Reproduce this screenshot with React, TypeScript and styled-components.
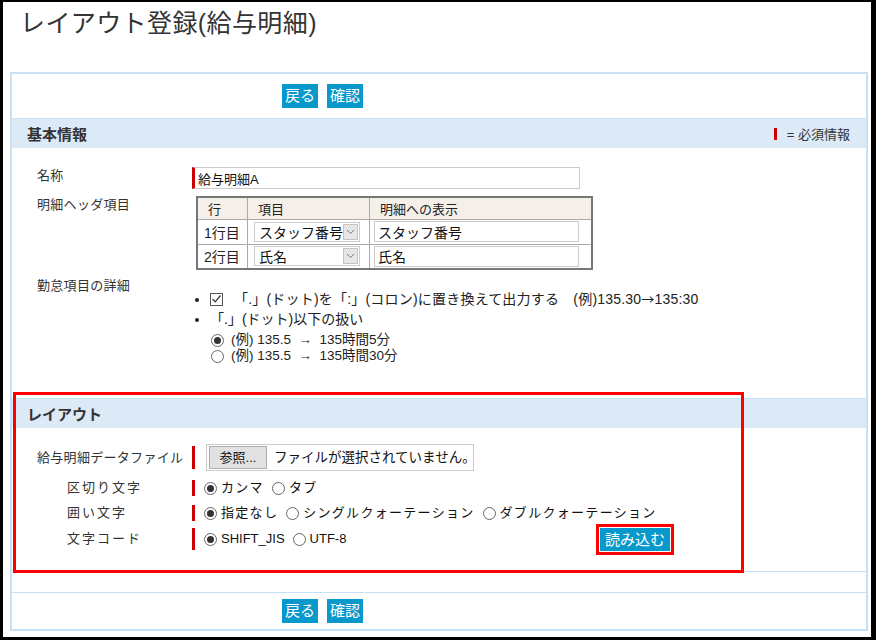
import styled, { createGlobalStyle } from "styled-components";

const GlobalStyle = createGlobalStyle`
  html, body {
    margin: 0;
    padding: 0;
    background: #fff;
  }
  body {
    font-family: "Liberation Sans", "Noto Sans CJK JP", sans-serif;
    color: #333;
  }
  * {
    box-sizing: border-box;
  }
`;

const Frame = styled.div`
  width: 876px;
  height: 640px;
  border-style: solid;
  border-color: #000;
  border-width: 2px 5px 3px 3px;
  background: #fff;
  overflow: hidden;
`;

const PageTitle = styled.h1`
  margin: 0;
  height: 70px;
  padding: 5px 0 0 17px;
  font-size: 25px;
  font-weight: normal;
  line-height: 32px;
  letter-spacing: 0.4px;
  white-space: nowrap;
  color: #333;
`;

const Panel = styled.div`
  margin: 0 3px 0 7px;
  border: 2px solid #c8e0f4;
`;

const ButtonBar = styled.div<{ $top?: boolean }>`
  display: flex;
  gap: 9px;
  height: ${(p) => (p.$top ? "44px" : "37px")};
  padding: ${(p) => (p.$top ? "10px" : "6px")} 0 0 270px;
  border-top: ${(p) => (p.$top ? "none" : "1px solid #c8e0f4")};
`;

const BlueButton = styled.button`
  height: 24px;
  padding: 0 3px;
  border: none;
  background: #0798cc;
  color: #fff;
  font-family: "Liberation Sans", "Noto Sans CJK JP", sans-serif;
  font-size: 15px;
  line-height: 24px;
  cursor: pointer;
`;

const Section = styled.section`
  position: relative;
  border-top: 1px solid #c8e0f4;
`;

const LayoutSection = styled(Section)`
  border-bottom: 1px solid #c8e0f4;
  margin-bottom: 20px;
`;

const SectionHead = styled.div`
  display: flex;
  align-items: center;
  justify-content: space-between;
  height: 29px;
  padding: 0 16px 0 15px;
  background: #dce9f7;
`;

const SectionTitle = styled.h2`
  margin: 0;
  font-size: 15px;
  font-weight: bold;
  color: #333;
`;

const Legend = styled.div`
  display: flex;
  align-items: center;
  gap: 10px;
  font-size: 13px;
  color: #333;
`;

const RedMark = styled.span`
  display: inline-block;
  width: 3px;
  height: 12px;
  background: #c00;
`;

const FormBody = styled.div<{ $pad: string }>`
  display: flex;
  flex-direction: column;
  padding: ${(p) => p.$pad};
`;

const FormRow = styled.div<{ $gap?: number; $center?: boolean }>`
  display: grid;
  grid-template-columns: 155px 1fr;
  align-items: ${(p) => (p.$center ? "center" : "start")};
  margin-bottom: ${(p) => p.$gap ?? 7}px;
`;

const Label = styled.div<{ $indent?: boolean }>`
  padding-left: ${(p) => (p.$indent ? "30px" : "0")};
  font-size: 13px;
  line-height: 18px;
  letter-spacing: ${(p) => (p.$indent ? "2px" : "0.3px")};
  color: #333;
`;

const TextInput = styled.input<{ $required?: boolean; $width: number }>`
  width: ${(p) => p.$width}px;
  height: ${(p) => (p.$required ? 22 : 21)}px;
  padding: 0 3px;
  border: 1px solid #ccc;
  border-left: ${(p) => (p.$required ? "3px solid #c00" : "1px solid #ccc")};
  font-family: "Liberation Sans", "Noto Sans CJK JP", sans-serif;
  font-size: ${(p) => (p.$required ? 13 : 14)}px;
  color: #111;
  outline: none;
`;

const HeaderTable = styled.table`
  width: 397px;
  border-collapse: collapse;
  border: 2px solid #777;
  font-size: 14px;
  color: #222;

  th,
  td {
    border: 1px solid #aaa;
    padding: 0 6px;
    text-align: left;
  }

  th {
    height: 22px;
    background: #f4f0e9;
    font-size: 13px;
    font-weight: normal;
    padding-left: 10px;
  }

  td {
    height: 25px;
  }
`;

const SelectBox = styled.div<{ $width: number }>`
  display: flex;
  align-items: center;
  justify-content: space-between;
  width: ${(p) => p.$width}px;
  height: 20px;
  padding: 0 1px 0 4px;
  border: 1px solid #ccc;
  background: #fff;
  font-size: 14px;
  color: #111;
`;

const ArrowBox = styled.span`
  display: flex;
  align-items: center;
  justify-content: center;
  width: 15px;
  height: 16px;
  background: #e6e6e6;
  border: 1px solid #c4c4c4;
`;

const OptionList = styled.ul`
  margin: 12px 0 0 0;
  padding-left: 18px;
  list-style: disc;
  font-size: 14px;
  color: #222;

  > li {
    line-height: 20px;
  }
`;

const CheckLine = styled.label`
  display: flex;
  align-items: center;
  gap: 11px;
  white-space: nowrap;
  letter-spacing: 0.2px;
`;

const CheckBox = styled.span`
  display: inline-flex;
  align-items: center;
  justify-content: center;
  width: 13px;
  height: 13px;
  border: 1px solid #555;
  background: #fff;
`;

const SubList = styled.div`
  display: flex;
  flex-direction: column;
  margin-top: 3px;
  padding-left: 1px;
`;

const RadioLine = styled.label`
  display: flex;
  align-items: center;
  gap: 7px;
  height: 16px;
  line-height: 16px;
  font-size: 13.5px;
  white-space: nowrap;
`;

const Arrow = styled.span`
  font-family: "Noto Sans CJK JP", sans-serif;
  font-size: 13px;
  line-height: 16px;
`;

const Radio = styled.span<{ $on?: boolean }>`
  position: relative;
  display: inline-block;
  flex: none;
  width: 13px;
  height: 13px;
  border: 1px solid #666;
  border-radius: 50%;
  background: #fff;

  &::after {
    content: "";
    display: ${(p) => (p.$on ? "block" : "none")};
    position: absolute;
    left: 2px;
    top: 2px;
    width: 7px;
    height: 7px;
    border-radius: 50%;
    background: #333;
  }
`;

const RequiredField = styled.div<{ $pad?: number; $h?: number }>`
  display: flex;
  align-items: center;
  height: ${(p) => p.$h ?? 16}px;
  padding-left: ${(p) => p.$pad ?? 9}px;
  border-left: 3px solid #c00;
  font-size: 13px;
  line-height: 16px;
  color: #111;
`;

const FileBox = styled.div`
  display: flex;
  flex: none;
  align-items: center;
  gap: 7px;
  width: 268px;
  height: 27px;
  padding: 0 2px;
  border: 1px solid #ccc;
  font-size: 13.5px;
  white-space: nowrap;
  color: #111;
`;

const BrowseButton = styled.span`
  display: inline-flex;
  flex: none;
  align-items: center;
  justify-content: center;
  width: 58px;
  height: 23px;
  background: #e1e1e1;
  border: 1px solid #adadad;
  font-size: 13px;
`;

const RadioGroup = styled.div`
  display: flex;
  align-items: center;
  gap: 8px;
`;

const Choice = styled.label`
  display: flex;
  align-items: center;
  gap: 4px;
`;

const ChoiceText = styled.span<{ $latin?: boolean }>`
  font-size: 13px;
  letter-spacing: ${(p) => (p.$latin ? "0" : "1.3px")};
`;

const CodeField = styled(RequiredField)`
  width: 478px;
  justify-content: space-between;
`;

const Highlight = styled.div`
  position: absolute;
  top: -7px;
  left: 1px;
  width: 731px;
  height: 181px;
  border: 3px solid #f00;
  pointer-events: none;
`;

const LoadButton = styled(BlueButton)`
  width: 70px;
  height: 23px;
  line-height: 23px;
  outline: 3px solid #f00;
  outline-offset: 1px;
`;

function Chevron() {
  return (
    <svg width="9" height="6" viewBox="0 0 9 6">
      <path d="M1 1 L4.5 4.5 L8 1" fill="none" stroke="#777" strokeWidth="1" />
    </svg>
  );
}

function Tick() {
  return (
    <svg width="11" height="10" viewBox="0 0 11 10">
      <path d="M1.5 5 L4.2 7.8 L9.5 1.5" fill="none" stroke="#333" strokeWidth="1.2" />
    </svg>
  );
}

function Choices({ items, on }: { items: string[]; on: number }) {
  return (
    <RadioGroup>
      {items.map((t, i) => (
        <Choice key={t}>
          <Radio $on={i === on} />
          <ChoiceText $latin={/^[A-Z]/.test(t)}>{t}</ChoiceText>
        </Choice>
      ))}
    </RadioGroup>
  );
}

export default function App() {
  const headerRows = [
    { row: "1行目", item: "スタッフ番号", display: "スタッフ番号" },
    { row: "2行目", item: "氏名", display: "氏名" },
  ];
  const roundings = ["135時間5分", "135時間30分"];

  return (
    <>
      <GlobalStyle />
      <Frame>
        <PageTitle>レイアウト登録(給与明細)</PageTitle>
        <Panel>
          <ButtonBar $top>
            <BlueButton>戻る</BlueButton>
            <BlueButton>確認</BlueButton>
          </ButtonBar>

          <Section>
            <SectionHead>
              <SectionTitle>基本情報</SectionTitle>
              <Legend>
                <RedMark />
                <span>= 必須情報</span>
              </Legend>
            </SectionHead>
            <FormBody $pad="19px 0 34px 25px">
              <FormRow>
                <Label>名称</Label>
                <TextInput $required $width={388} defaultValue="給与明細A" />
              </FormRow>
              <FormRow>
                <Label>明細ヘッダ項目</Label>
                <HeaderTable style={{ marginLeft: 4 }}>
                  <colgroup>
                    <col style={{ width: 52 }} />
                    <col style={{ width: 122 }} />
                    <col style={{ width: 223 }} />
                  </colgroup>
                  <thead>
                    <tr>
                      <th>行</th>
                      <th>項目</th>
                      <th>明細への表示</th>
                    </tr>
                  </thead>
                  <tbody>
                    {headerRows.map((r) => (
                      <tr key={r.row}>
                        <td>{r.row}</td>
                        <td>
                          <SelectBox $width={106}>
                            {r.item}
                            <ArrowBox>
                              <Chevron />
                            </ArrowBox>
                          </SelectBox>
                        </td>
                        <td style={{ paddingLeft: 4 }}>
                          <TextInput $width={205} defaultValue={r.display} />
                        </td>
                      </tr>
                    ))}
                  </tbody>
                </HeaderTable>
              </FormRow>
              <FormRow $gap={0}>
                <Label>勤怠項目の詳細</Label>
                <OptionList>
                  <li>
                    <CheckLine>
                      <CheckBox>
                        <Tick />
                      </CheckBox>
                      <span>
                        「.」(ドット)を「:」(コロン)に置き換えて出力する　(例)135.30<Arrow>→</Arrow>135:30
                      </span>
                    </CheckLine>
                  </li>
                  <li>
                    「.」(ドット)以下の扱い
                    <SubList>
                      {roundings.map((r, i) => (
                        <RadioLine key={r}>
                          <Radio $on={i === 0} />
                          <span>(例) 135.5 &nbsp;→&nbsp; {r}</span>
                        </RadioLine>
                      ))}
                    </SubList>
                  </li>
                </OptionList>
              </FormRow>
            </FormBody>
          </Section>

          <LayoutSection>
            <SectionHead>
              <SectionTitle>レイアウト</SectionTitle>
            </SectionHead>
            <FormBody $pad="18px 0 21px 25px">
              <FormRow $center $gap={10}>
                <Label>給与明細データファイル</Label>
                <RequiredField $pad={11} $h={23}>
                  <FileBox>
                    <BrowseButton>参照...</BrowseButton>
                    <span>ファイルが選択されていません。</span>
                  </FileBox>
                </RequiredField>
              </FormRow>
              <FormRow $center $gap={7}>
                <Label $indent>区切り文字</Label>
                <RequiredField>
                  <Choices items={["カンマ", "タブ"]} on={0} />
                </RequiredField>
              </FormRow>
              <FormRow $center $gap={6}>
                <Label $indent>囲い文字</Label>
                <RequiredField>
                  <Choices items={["指定なし", "シングルクォーテーション", "ダブルクォーテーション"]} on={0} />
                </RequiredField>
              </FormRow>
              <FormRow $center $gap={0}>
                <Label $indent>文字コード</Label>
                <CodeField $h={22}>
                  <Choices items={["SHIFT_JIS", "UTF-8"]} on={0} />
                  <LoadButton>読み込む</LoadButton>
                </CodeField>
              </FormRow>
            </FormBody>
            <Highlight />
          </LayoutSection>

          <ButtonBar>
            <BlueButton>戻る</BlueButton>
            <BlueButton>確認</BlueButton>
          </ButtonBar>
        </Panel>
      </Frame>
    </>
  );
}
